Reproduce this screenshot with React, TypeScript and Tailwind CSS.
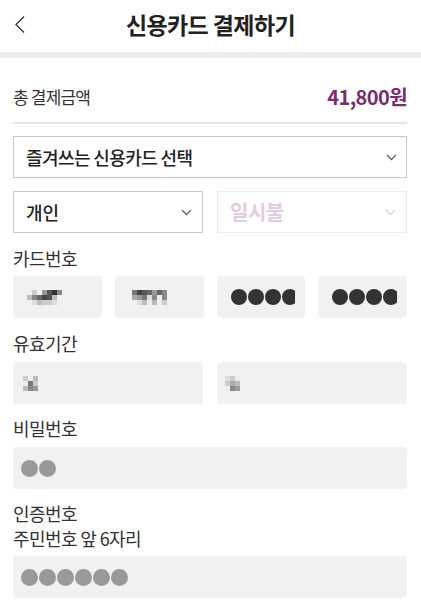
import React from "react";

const font = { fontFamily: '"Noto Sans CJK KR", "Noto Sans", sans-serif' };

// 드롭다운 화살표
const Chevron = ({ color }: { color: string }) => (
  <svg width="11" height="7" viewBox="0 0 11 7" fill="none">
    <path d="M1 1l4.5 4.5L10 1" stroke={color} strokeWidth="1.4" />
  </svg>
);

// 가려진 숫자 (모자이크)
const Mosaic = ({ cells }: { cells: string[][] }) => (
  <svg width={cells[0].length * 5} height={cells.length * 5}>
    {cells.map((row, y) =>
      row.map((c, x) => (c ? <rect key={`${x}-${y}`} x={x * 5} y={y * 5} width="5" height="5" fill={c} /> : null))
    )}
  </svg>
);

const Dots = ({ count, color, size, gap }: { count: number; color: string; size: number; gap: number }) => (
  <div className="flex" style={{ gap }}>
    {Array.from({ length: count }).map((_, i) => (
      <span key={i} className="shrink-0 rounded-full" style={{ width: size, height: size, backgroundColor: color }} />
    ))}
  </div>
);

const card1 = [
  ["", "#ccc", "", "#999", "#555", "#333", "#888", ""],
  ["#bbb", "#888", "#666", "#444", "#555", "#bbb", "", ""],
  ["", "#ddd", "#bbb", "#ccc", "#ccc", "#ddd", "", ""],
];
const card2 = [
  ["#777", "#444", "#555", "#666", "#999", "#666", "#888"],
  ["#aaa", "#999", "#777", "#ddd", "#888", "#eee", "#888"],
  ["", "#ddd", "#bbb", "#eee", "#bbb", "", "#ccc"],
];
const exp1 = [
  ["#ccc", "#eee", "#bbb"],
  ["#eee", "#777", "#ccc"],
  ["#bbb", "#888", "#999"],
];
const exp2 = [
  ["#ddd", "#ccc", "#eee"],
  ["#ccc", "#aaa", "#bbb"],
  ["#eee", "#888", "#999"],
];

export default function App() {
  return (
    <div className="w-[421px] h-[607px] bg-white overflow-hidden text-[#333]" style={font}>
      {/* 헤더 */}
      <div className="relative h-[52px] flex items-center justify-center pb-[3px]">
        <svg className="absolute left-[14px] top-[15px]" width="12" height="19" viewBox="0 0 12 19" fill="none">
          <path d="M10 1.5L2 9.5l8 8" stroke="#333" strokeWidth="1.3" />
        </svg>
        <h1 className="text-[23px] font-bold text-[#222] tracking-[-0.6px]">신용카드 결제하기</h1>
      </div>
      <div className="h-[6px] bg-[#eeeeee]" />

      <div className="px-[13px] pr-[14px]">
        {/* 총 결제금액 */}
        <div className="mt-[24px] h-[30px] flex items-center justify-between">
          <span className="text-[17px] tracking-[-0.8px]">총 결제금액</span>
          <span className="text-[20px] font-bold text-[#7a2d6c] tracking-[-0.6px]">41,800원</span>
        </div>
        <div className="mt-[10px] h-[2px] bg-[#e5e5e5]" />

        {/* 카드 선택 */}
        <div className="mt-[12px] h-[42px] border border-[#c8c8c8] flex items-center justify-between pl-[12px] pr-[9px]">
          <span className="text-[18px] font-medium text-[#222] tracking-[-0.6px]">즐겨쓰는 신용카드 선택</span>
          <Chevron color="#666" />
        </div>

        <div className="mt-[13px] grid grid-cols-2 gap-[14px]">
          <div className="h-[42px] border border-[#c8c8c8] flex items-center justify-between pl-[12px] pr-[10px]">
            <span className="text-[18px] font-medium text-[#222]">개인</span>
            <Chevron color="#666" />
          </div>
          <div className="h-[42px] border border-[#eeeeee] flex items-center justify-between pl-[12px] pr-[10px]">
            <span className="text-[20px] font-bold text-[#e3cbe0] tracking-[-0.5px]">일시불</span>
            <Chevron color="#d8d8d8" />
          </div>
        </div>

        {/* 카드번호 */}
        <div className="mt-[13px] h-[24px] leading-[24px] text-[18px] tracking-[-0.6px]">카드번호</div>
        <div className="mt-[6px] grid grid-cols-4 gap-[13px]">
          <div className="h-[42px] rounded-[4px] bg-[#f1f1f1] flex items-center pl-[14px]">
            <Mosaic cells={card1} />
          </div>
          <div className="h-[42px] rounded-[4px] bg-[#f1f1f1] flex items-center pl-[17px]">
            <Mosaic cells={card2} />
          </div>
          <div className="h-[42px] rounded-[4px] bg-[#f1f1f1] flex items-center pl-[14px] pr-[10px]">
            <div className="w-full overflow-hidden">
              <Dots count={4} color="#333" size={16} gap={1} />
            </div>
          </div>
          <div className="h-[42px] rounded-[4px] bg-[#f1f1f1] flex items-center pl-[14px] pr-[10px]">
            <div className="w-full overflow-hidden">
              <Dots count={4} color="#333" size={16} gap={1} />
            </div>
          </div>
        </div>

        {/* 유효기간 */}
        <div className="mt-[13px] h-[24px] leading-[24px] text-[18px] tracking-[-0.6px]">유효기간</div>
        <div className="mt-[7px] grid grid-cols-2 gap-[14px]">
          <div className="h-[42px] rounded-[4px] bg-[#f1f1f1] flex items-center pl-[10px]">
            <Mosaic cells={exp1} />
          </div>
          <div className="h-[42px] rounded-[4px] bg-[#f1f1f1] flex items-center pl-[8px]">
            <Mosaic cells={exp2} />
          </div>
        </div>

        {/* 비밀번호 */}
        <div className="mt-[12px] h-[24px] leading-[24px] text-[18px] tracking-[-0.6px]">비밀번호</div>
        <div className="mt-[7px] h-[42px] rounded-[4px] bg-[#f1f1f1] flex items-center pl-[8px]">
          <Dots count={2} color="#999" size={17} gap={1} />
        </div>

        {/* 인증번호 */}
        <div className="mt-[12px] text-[18px] leading-[25px] tracking-[-0.6px]">
          <div>인증번호</div>
          <div>주민번호 앞 6자리</div>
        </div>
        <div className="mt-[5px] h-[42px] rounded-[4px] bg-[#f1f1f1] flex items-center pl-[8px]">
          <Dots count={6} color="#999" size={17} gap={1} />
        </div>
      </div>
    </div>
  );
}
